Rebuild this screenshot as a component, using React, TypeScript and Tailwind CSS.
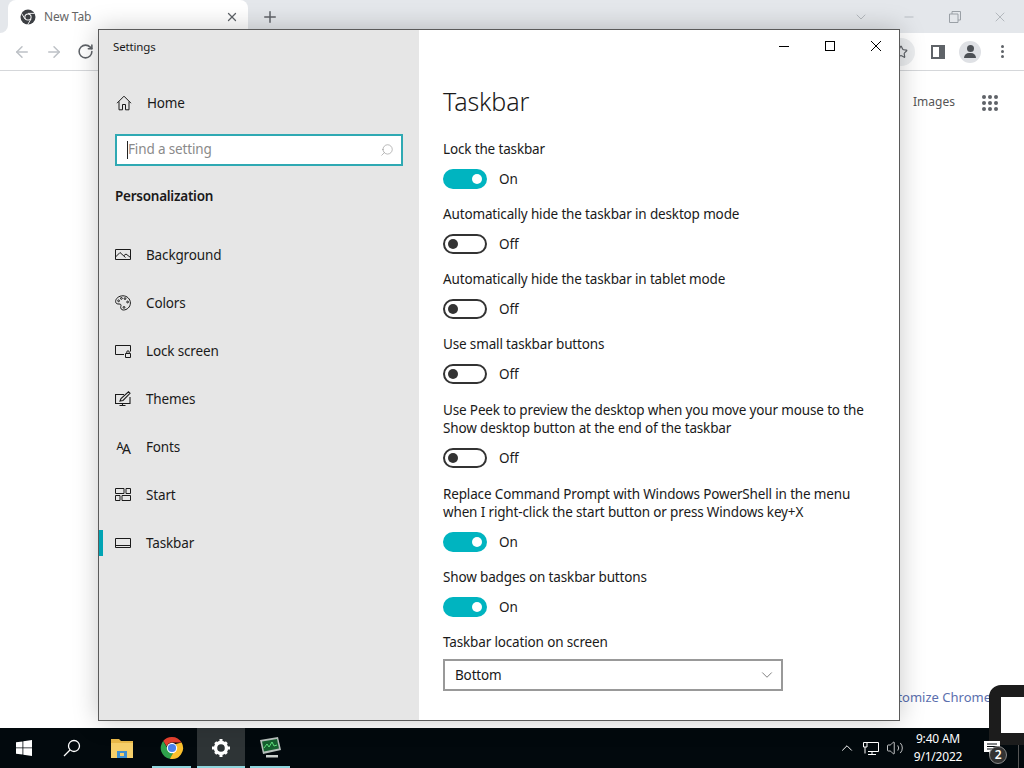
import React from 'react';
import { ChevronDown, Minus, Plus, X, ArrowLeft, ArrowRight, RotateCw, Star, Search, ChevronUp, Volume2 } from 'lucide-react';

const ChromeMono = () => (
  <svg width="16" height="16" viewBox="0 0 16 16">
    <circle cx="8" cy="8" r="7.5" fill="#3c3f43" />
    <circle cx="8" cy="8" r="3.6" fill="#fff" />
    <circle cx="8" cy="8" r="2.6" fill="#3c3f43" />
    <path d="M8 4.4h6.6M5 10l-3.4-5.6M11 10l-3.4 5.8" stroke="#fff" strokeWidth="0.9" fill="none" />
  </svg>
);

const ChromeColor = () => (
  <svg width="24" height="24" viewBox="0 0 24 24">
    <path d="M12 1a11 11 0 0 1 9.6 5.6H12a5.4 5.4 0 0 0-5.2 3.9L3.2 5A11 11 0 0 1 12 1z" fill="#e3402f" />
    <path d="M3.2 5l4.9 8.6a5.4 5.4 0 0 0 5.2 3.7l-3.5 5.5A11 11 0 0 1 3.2 5z" fill="#2fa24c" />
    <path d="M21.6 6.6A11 11 0 0 1 9.8 22.8l4.9-8.6A5.4 5.4 0 0 0 15.8 8z" fill="#fbc02d" />
    <circle cx="12" cy="12" r="5.2" fill="#fff" />
    <circle cx="12" cy="12" r="4.1" fill="#4a80ec" />
  </svg>
);

const HomeIcon = () => (
  <svg width="16" height="16" viewBox="0 0 16 16" fill="none" stroke="#1a1a1a" strokeWidth="1">
    <path d="M1 8.2 8 1.2l7 7M3 6.5v8.3h3.5V9.5h3v5.3H13V6.5" />
  </svg>
);

const BackgroundIcon = () => (
  <svg width="16" height="16" viewBox="0 0 16 16" fill="none" stroke="#1a1a1a" strokeWidth="1">
    <path d="M.5 2.500h15v10H.5zM.5 10l4.500-4.500 5.500 5M9 8.500l2-1.500 4.500 3.500" />
  </svg>
);

const ColorsIcon = () => (
  <svg width="16" height="16" viewBox="0 0 16 16" fill="none" stroke="#1a1a1a" strokeWidth="1">
    <path d="M8 .8C3.8.8.6 3.4.6 6.6c0 2 2 2.6 3.4 2.4 1.8-.2 2.4 1 1.8 2.4-.6 1.8.6 3.6 2.6 3.6 3.6 0 7-3 7-7S12 .8 8 .8z" />
    <circle cx="3.600" cy="5.800" r=".9" />
    <circle cx="6.400" cy="3.400" r=".9" />
    <circle cx="10" cy="3.600" r=".9" />
    <circle cx="12.600" cy="7" r=".9" />
    <circle cx="9" cy="12.400" r=".9" />
  </svg>
);

const LockScreenIcon = () => (
  <svg width="16" height="16" viewBox="0 0 16 16" fill="none" stroke="#1a1a1a" strokeWidth="1">
    <path d="M9 11.500H.5v-9h15v6M10.500 10.500h5v4h-5zM11.800 10.500V9a1.200 1.200 0 0 1 2.400 0v1.500" />
  </svg>
);

const ThemesIcon = () => (
  <svg width="16" height="16" viewBox="0 0 16 16" fill="none" stroke="#1a1a1a" strokeWidth="1.100">
    <path d="M9 3.500H.5v9h14.500V6M7.500 12.500v2M4.500 14.500h6M5 10l1-2.500L13.500.8l1.500 1.500L8 9.500z" />
  </svg>
);

const StartIcon = () => (
  <svg width="16" height="16" viewBox="0 0 16 16" fill="none" stroke="#1a1a1a" strokeWidth="1">
    <path d="M.5 1.500h8.500v5H.5zM11 1.500h4.500v5H11zM.5 8.500h4.500v5H.5zM7 8.500h8.500v5H7z" />
  </svg>
);

const TaskbarIcon = () => (
  <svg width="16" height="16" viewBox="0 0 16 16" fill="none" stroke="#1a1a1a" strokeWidth="1">
    <path d="M.5 3.500h15v9H.5zM.5 10.500h15" />
  </svg>
);

const navItems = [
  { label: 'Background', icon: <BackgroundIcon /> },
  { label: 'Colors', icon: <ColorsIcon /> },
  { label: 'Lock screen', icon: <LockScreenIcon /> },
  { label: 'Themes', icon: <ThemesIcon /> },
  { label: 'Fonts', icon: <span className="text-[14px] leading-4 text-[#1a1a1a] tracking-[-1.5px]"><span className="text-[11px] align-[4px]">A</span>A</span> },
  { label: 'Start', icon: <StartIcon /> },
  { label: 'Taskbar', icon: <TaskbarIcon />, active: true },
];

const Toggle = ({ on }: { on: boolean }) => (
  <div className="flex items-center h-5 gap-3">
    {on ? (
      <div className="w-11 h-5 rounded-full bg-[#00b4c0] flex items-center justify-end pr-[5px]">
        <div className="w-[10px] h-[10px] rounded-full bg-white" />
      </div>
    ) : (
      <div className="w-11 h-5 rounded-full border-2 border-[#333] flex items-center pl-[3px]">
        <div className="w-[10px] h-[10px] rounded-full bg-[#333]" />
      </div>
    )}
    <span>{on ? 'On' : 'Off'}</span>
  </div>
);

const settings = [
  { lines: ['Lock the taskbar'], on: true },
  { lines: ['Automatically hide the taskbar in desktop mode'], on: false },
  { lines: ['Automatically hide the taskbar in tablet mode'], on: false },
  { lines: ['Use small taskbar buttons'], on: false },
  { lines: ['Use Peek to preview the desktop when you move your mouse to the', 'Show desktop button at the end of the taskbar'], on: false },
  { lines: ['Replace Command Prompt with Windows PowerShell in the menu', 'when I right-click the start button or press Windows key+X'], on: true },
  { lines: ['Show badges on taskbar buttons'], on: true },
];

const SettingsWindow = () => (
  <div className="absolute left-[98px] top-[29px] w-[802px] h-[692px] flex border border-[#5a5a5a] shadow-[0_0_24px_rgba(0,0,0,0.22)] text-[13.5px] tracking-[-0.15px] text-[#1a1a1a]">
    <div className="w-[320px] bg-[#e6e6e6] flex flex-col">
      <div className="h-[34px] pl-[14px] pt-[9px] text-[11.5px] leading-4">Settings</div>
      <div className="flex items-center h-5 mt-[29px] pl-[17px] gap-[15px]">
        <HomeIcon />
        <span>Home</span>
      </div>
      <div className="mx-4 mt-[21px] h-8 w-[288px] border-2 border-[#2fa9b3] bg-white flex items-center pl-[10px] pr-[7px]">
        <div className="w-px h-[18px] bg-[#222]" />
        <span className="flex-1 text-[#8a8a8a] pb-0.5">Find a setting</span>
        <Search size={14} strokeWidth={1} className="text-[#8a8a8a] -scale-x-100" />
      </div>
      <div className="mt-5 pl-4 h-5 leading-5 font-semibold tracking-[-0.25px]">Personalization</div>
      <div className="mt-[25px] flex flex-col">
        {navItems.map((item) => (
          <div key={item.label} className="relative h-12 flex items-center pl-4 gap-[15px]">
            {item.active && <div className="absolute left-0 top-[11px] w-1 h-[26px] bg-[#00a4b4]" />}
            <div className="w-4 h-4 flex items-center justify-center">{item.icon}</div>
            <span>{item.label}</span>
          </div>
        ))}
      </div>
    </div>
    <div className="flex-1 bg-white flex flex-col pl-6">
      <div className="flex justify-end items-start h-[32px] pr-[18px] pt-[11px] gap-[36px] text-black">
        <div className="w-[10px] h-[10px] flex items-center"><div className="w-[10px] h-px bg-black" /></div>
        <div className="w-[10px] h-[10px] border border-black" />
        <svg width="10" height="10" viewBox="0 0 10 10" stroke="#000" strokeWidth="1"><path d="M0 0l10 10M10 0L0 10" /></svg>
      </div>
      <div className="mt-[21px] text-[25px] leading-9 font-light tracking-[-0.1px]">Taskbar</div>
      <div className="mt-[21px] flex flex-col gap-4">
        {settings.map((s, i) => (
          <div key={i} className={s.lines.length > 1 ? 'mt-px' : ''}>
            {s.lines.map((l) => <div key={l} className="leading-[18px]">{l}</div>)}
            <div className="mt-[11px]"><Toggle on={s.on} /></div>
          </div>
        ))}
        <div>
          <div className="leading-[18px]">Taskbar location on screen</div>
          <div className="mt-2 w-[340px] h-8 border-2 border-[#999] flex items-center justify-between pl-[10px] pr-[5px]">
            <span>Bottom</span>
            <ChevronDown size={18} strokeWidth={1} className="text-[#555]" />
          </div>
        </div>
      </div>
    </div>
  </div>
);

const Taskbar = () => (
  <div className="h-10 bg-[#02090d] flex items-stretch text-white text-[12px] tracking-[-0.2px] shrink-0">
    <div className="w-12 flex items-center justify-center">
      <svg width="16" height="16" viewBox="0 0 16 16" fill="#fff"><path d="M0 2.300 6.500 1.400V7.500H0zM7.300 1.300 16 0v7.500H7.300zM0 8.300h6.500v6.300L0 13.700zM7.300 8.300H16V16l-8.700-1.300z" /></svg>
    </div>
    <div className="w-12 flex items-center justify-center">
      <svg width="18" height="18" viewBox="0 0 18 18" fill="none" stroke="#fff" strokeWidth="1.300"><circle cx="11" cy="7" r="5.500" /><path d="M7 11l-6 6" /></svg>
    </div>
    <div className="w-[52px] relative flex items-center justify-center">
      <svg width="22" height="20" viewBox="0 0 22 20">
        <path d="M0 1h8l2 2h12v4H0z" fill="#e9b949" />
        <path d="M0 5h22v15H0z" fill="#f6cf6a" />
        <path d="M6 13h10v7H6z" fill="#3f8fd0" />
        <path d="M9 15h4v3H9z" fill="#f6cf6a" />
      </svg>
    </div>
    <div className="w-[49px] relative flex items-center justify-center pr-px">
      <ChromeColor />
      <div className="absolute left-1 right-[6px] bottom-0 h-0.5 bg-[#8fd5dd]" />
    </div>
    <div className="w-12 relative flex items-center justify-center bg-[#2e3436]">
      <svg width="18" height="18" viewBox="0 0 18 18">
        <circle cx="9" cy="9" r="5.500" fill="none" stroke="#fff" strokeWidth="3.400" />
        <path d="M7.500 0h3v3h-3zM7.500 15h3v3h-3zM0 7.500h3v3H0zM15 7.500h3v3h-3zM2.200 4.300l2.100-2.100 2 2-2.100 2.100zM11.700 13.800l2.100-2.100 2 2-2.100 2.100zM13.800 2.200l2 2.100-2 2-2.100-2.100zM4.300 11.700l2 2.100-2 2-2.100-2.100z" fill="#fff" />
      </svg>
      <div className="absolute inset-x-0 bottom-0 h-0.5 bg-[#8fd5dd]" />
    </div>
    <div className="w-[50px] relative flex items-center justify-center">
      <svg width="24" height="22" viewBox="0 0 24 22">
        <path d="M2 3 20 0l3 13-18 4z" fill="#b7c0bc" />
        <path d="M4 4.500 19 2l2 9.500-15 3z" fill="#15602f" />
        <path d="M6 11l3-4 2 3 3-5 2 4 3-1" stroke="#5fe07d" fill="none" />
        <path d="M8 18h12v2.500H8z" fill="#c9cfcc" />
      </svg>
      <div className="absolute left-[5px] right-[5px] bottom-0 h-0.5 bg-[#8fd5dd]" />
    </div>
    <div className="flex-1" />
    <div className="flex items-center pr-[5px]">
      <ChevronUp size={18} strokeWidth={1.300} className="mr-[7px]" />
      <svg width="16" height="14" viewBox="0 0 16 14" fill="none" stroke="#fff" strokeWidth="1" className="mr-[7px]">
        <path d="M4 1.500h11.500v9H5M.5 1.500H4V6H.5zM2 6v6.500M9 10.500v3M5 13.500h8" />
      </svg>
      <Volume2 size={18} strokeWidth={1} className="mr-[6px]" />
      <div className="w-[56px] flex flex-col items-center leading-[18px]">
        <span>9:40 AM</span>
        <span>9/1/2022</span>
      </div>
      <div className="relative w-[52px] h-10 flex items-center justify-center">
        <svg width="16" height="15" viewBox="0 0 16 15" fill="#fff"><path d="M0 0h16v11H8l-3 3v-3H0z" /><path d="M3 3h10M3 5.500h10M3 8h10" stroke="#02090d" /></svg>
        <div className="absolute right-[11px] bottom-1 w-[18px] h-[18px] rounded-full bg-[#333] border border-[#888] flex items-center justify-center text-[12px] font-semibold leading-none">2</div>
      </div>
      <div className="w-px h-10 bg-[#555]" />
    </div>
  </div>
);

export default function App() {
  return (
    <div className="relative w-[1024px] h-[768px] overflow-hidden flex flex-col bg-white font-['Noto_Sans',sans-serif]">
      <div className="h-[33px] bg-[#e4e7eb] flex items-end text-[#666]">
        <div className="w-2 h-full bg-white"><div className="h-full bg-[#e4e7eb] rounded-br-lg" /></div>
        <div className="w-[240px] h-[33px] bg-white rounded-t-lg flex items-center pl-3 pr-2 text-[12px] tracking-[-0.1px]">
          <ChromeMono />
          <span className="ml-[8px] flex-1">New Tab</span>
          <X size={14} strokeWidth={2.200} className="text-[#5f6368] mr-[1px]" />
        </div>
        <div className="w-11 h-full flex items-center justify-center">
          <Plus size={18} strokeWidth={2} className="text-[#5f6368]" />
        </div>
        <div className="flex-1 h-full flex items-center justify-end text-[#9aa0a6]">
          <ChevronDown size={16} strokeWidth={1} />
          <Minus size={14} strokeWidth={1} className="ml-[33px]" />
          <svg width="12" height="12" viewBox="0 0 12 12" fill="none" stroke="currentColor" className="ml-[33px]"><path d="M.5 3h8.500v8.500H.5zM3 3V.5h8.500V9H9" /></svg>
          <X size={16} strokeWidth={1} className="ml-[31px] mr-4" />
        </div>
      </div>
      <div className="h-[38px] border-b border-[#d5d7da] bg-white flex items-center pl-[13px] pr-5 text-[#5f6368]">
        <ArrowLeft size={18} strokeWidth={2} className="text-[#bdc1c6]" />
        <ArrowRight size={18} strokeWidth={2} className="ml-[14px] text-[#bdc1c6]" />
        <RotateCw size={17} strokeWidth={2.200} className="ml-[14px]" />
        <div className="flex-1" />
        <div className="w-7 h-7 rounded-full bg-[#eceef0] flex items-center justify-center mr-4"><Star size={14} strokeWidth={2} /></div>
        <svg width="14" height="14" viewBox="0 0 14 14" className="mr-[14px]"><path d="M0 0h14v14H0z" fill="#5f6368" /><path d="M2 2h6v10H2z" fill="#fff" /></svg>
        <div className="w-[22px] h-[22px] rounded-full bg-[#dfe1e5] flex flex-col items-center justify-center mr-5">
          <div className="w-[7px] h-[7px] rounded-full bg-[#4d5156]" />
          <div className="w-3 h-[5px] rounded-t-full bg-[#4d5156] mt-px" />
        </div>
        <div className="flex flex-col gap-[2px]">
          <div className="w-[3px] h-[3px] rounded-full bg-[#5f6368]" />
          <div className="w-[3px] h-[3px] rounded-full bg-[#5f6368]" />
          <div className="w-[3px] h-[3px] rounded-full bg-[#5f6368]" />
        </div>
      </div>
      <div className="relative flex-1 bg-white">
        <span className="absolute left-[913px] top-[21px] text-[12px] leading-5 text-[#555]">Images</span>
        <div className="absolute left-[982px] top-[24px] grid grid-cols-3 gap-[2px]">
          {Array.from({ length: 9 }).map((_, i) => (
            <div key={i} className="w-[4px] h-[4px] rounded-full bg-[#5f6368]" />
          ))}
        </div>
        <span className="absolute right-[33px] top-[616px] text-[13px] leading-5 text-[#5b6fae]">Customize Chrome</span>
        <div className="absolute left-[989px] top-[614px] w-[60px] h-[60px] rounded-tl-xl border-[12px] border-[#1c1c1c] bg-white" />
      </div>
      <Taskbar />
      <SettingsWindow />
    </div>
  );
}
